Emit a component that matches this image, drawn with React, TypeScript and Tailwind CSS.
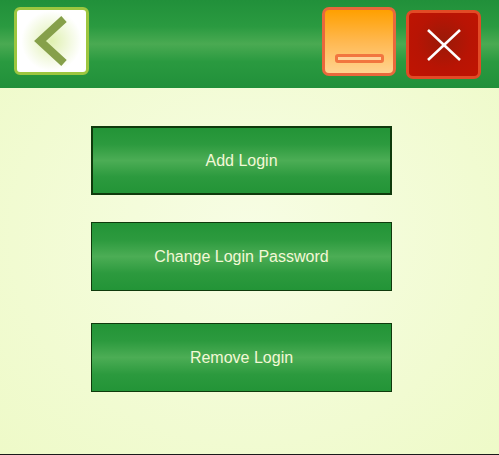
import React from "react";

const btnBg =
  "bg-[linear-gradient(to_bottom,#239437_0%,#2c9a3e_25%,#4cad55_50%,#2c9a3e_75%,#239437_100%)]";

function MenuButton({ label, thick }: { label: string; thick?: boolean }) {
  return (
    <div
      className={`w-[301px] h-[69px] flex items-center justify-center ${btnBg} ${
        thick ? "border-2 border-[#0f3a0c]" : "border border-[#0f3a0c]"
      } text-[16px] text-[#f3f8d6]`}
    >
      {label}
    </div>
  );
}

export default function App() {
  return (
    <div
      className="w-[499px] h-[455px] flex flex-col overflow-hidden border-b border-[#1a1a1a]"
      style={{ fontFamily: '"Liberation Sans", Arial, sans-serif' }}
    >
      <div className="h-[88px] shrink-0 flex items-start justify-between px-[14px] pt-[7px] bg-[linear-gradient(to_bottom,#21903a_0%,#2a9a40_30%,#4aaa52_50%,#2a9a40_70%,#21903a_100%)]">
        <div className="w-[75px] h-[68px] rounded-[6px] border-[3px] border-[#9dc640] bg-[radial-gradient(circle_at_50%_50%,#dff0b0_0%,#ffffff_65%)] flex items-center justify-center">
          <svg width="40" height="52" viewBox="0 0 40 52">
            <polyline
              points="32,4 8,26 32,48"
              fill="none"
              stroke="#86a04a"
              strokeWidth="8"
              strokeLinecap="butt"
              strokeLinejoin="miter"
            />
          </svg>
        </div>
        <div className="flex items-start gap-[10px] pr-[4px]">
          <div className="w-[74px] h-[69px] rounded-[7px] border-[3px] border-[#e9683c] bg-[linear-gradient(to_bottom,#ffa000_0%,#ffb850_50%,#ffd390_100%)] flex items-end justify-center pb-[10px]">
            <div className="w-[49px] h-[9px] rounded-[3px] border-[3px] border-[#f2763f] bg-[#ffd49a]" />
          </div>
          <div className="mt-[3px] w-[75px] h-[69px] rounded-[7px] border-[3px] border-[#e24a26] bg-[radial-gradient(circle_at_50%_45%,#9a1a08_0%,#b81404_55%,#c01402_100%)] flex items-center justify-center">
            <svg width="36" height="34" viewBox="0 0 36 34">
              <line x1="2" y1="2" x2="34" y2="32" stroke="#ffffff" strokeWidth="2.5" />
              <line x1="34" y1="2" x2="2" y2="32" stroke="#ffffff" strokeWidth="2.5" />
            </svg>
          </div>
        </div>
      </div>
      <div className="flex-1 flex flex-col items-start pl-[91px] pt-[38px] bg-[radial-gradient(ellipse_at_50%_40%,#f7fde4_0%,#eefac8_100%)]">
        <MenuButton label="Add Login" thick />
        <div className="mt-[27px]">
          <MenuButton label="Change Login Password" />
        </div>
        <div className="mt-[32px]">
          <MenuButton label="Remove Login" />
        </div>
      </div>
    </div>
  );
}
